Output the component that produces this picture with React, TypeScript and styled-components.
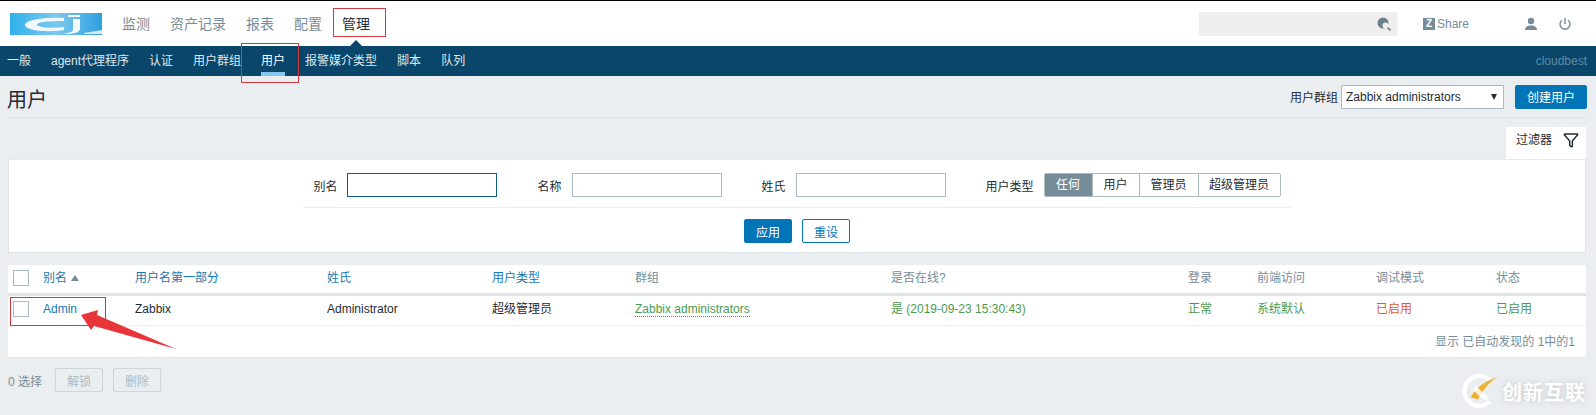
import { createGlobalStyle, styled } from "styled-components";
import { Filter } from "lucide-react";

const GlobalStyle = createGlobalStyle`
  html, body {
    margin: 0;
    padding: 0;
    height: 415px;
    overflow: hidden;
    background: #ebeef0;
  }
  body {
    font-family: "Liberation Sans", "Noto Sans CJK SC", sans-serif;
    font-size: 12px;
    color: #1f2c33;
  }
`;

const Page = styled.div`
  position: relative;
  width: 1596px;
  height: 415px;
  overflow: hidden;
`;

const TopBar = styled.header`
  display: flex;
  align-items: center;
  height: 45px;
  border-top: 1px solid #000;
  background: #fff;
  padding-left: 10px;
`;

const MainNav = styled.nav`
  display: flex;
  margin-left: 10px;
`;

const MainNavItem = styled.a<{ $active?: boolean }>`
  position: relative;
  padding: 0 10px;
  line-height: 44px;
  font-size: 14px;
  color: ${(p) => (p.$active ? "#1f2c33" : "#768d99")};

  ${(p) =>
    p.$active &&
    `&::after {
      content: "";
      position: absolute;
      left: 50%;
      bottom: -1px;
      margin-left: -7px;
      border: 7px solid transparent;
      border-top: 0;
      border-bottom-color: #0a466a;
    }`}
`;

const TopRight = styled.div`
  display: flex;
  align-items: center;
  margin-left: auto;
`;

const SearchBox = styled.div`
  display: flex;
  align-items: center;
  justify-content: flex-end;
  box-sizing: border-box;
  width: 198px;
  height: 24px;
  padding-right: 6px;
  background: #eeeeee;
`;

const ShareLink = styled.a`
  display: flex;
  align-items: center;
  gap: 2px;
  margin-left: 26px;
  color: #768d99;
  font-size: 12px;
`;

const ZMark = styled.span`
  display: block;
  width: 12px;
  height: 12px;
  line-height: 12px;
  text-align: center;
  background: #768d99;
  color: #fff;
  font-size: 10px;
  font-weight: 700;
`;

const TopIcon = styled.span<{ $gap: number }>`
  display: flex;
  margin-left: ${(p) => p.$gap}px;
`;

const SubBar = styled.div`
  display: flex;
  height: 30px;
  background: #0a466a;
  padding: 0 9px 0 7px;
`;

const SubItem = styled.a<{ $active?: boolean }>`
  position: relative;
  margin-right: 20px;
  line-height: 30px;
  color: ${(p) => (p.$active ? "#fff" : "#dfe8ee")};
  white-space: nowrap;

  ${(p) =>
    p.$active &&
    `&::after {
      content: "";
      position: absolute;
      left: 0;
      right: 0;
      bottom: 0;
      height: 4px;
      background: #85c6ee;
    }`}
`;

const ServerName = styled.span`
  margin-left: auto;
  line-height: 30px;
  color: #5f8ba5;
`;

const TitleRow = styled.div`
  display: flex;
  align-items: center;
  height: 41px;
  margin: 0 9px 0 8px;
  border-bottom: 1px solid #dfe4e7;
`;

const PageTitle = styled.h1`
  margin: 4px 0 0 -1px;
  font-size: 20px;
  font-weight: 400;
  color: #1f2c33;
`;

const TitleControls = styled.div`
  display: flex;
  align-items: center;
  margin-left: auto;
`;

const SelectLabel = styled.label`
  margin-right: 3px;
`;

const SelectBox = styled.div`
  display: flex;
  align-items: center;
  justify-content: space-between;
  box-sizing: border-box;
  width: 163px;
  height: 24px;
  padding: 0 6px 0 4px;
  background: #fff;
  border: 1px solid #acbbc2;
`;

const SelectArrow = styled.span`
  width: 0;
  height: 0;
  border-left: 3px solid transparent;
  border-right: 3px solid transparent;
  border-top: 6px solid #1f2c33;
`;

const Button = styled.button<{ $variant: "primary" | "outline" | "disabled"; $width: number }>`
  box-sizing: border-box;
  width: ${(p) => p.$width}px;
  height: 24px;
  padding: 0;
  border-radius: 2px;
  font: inherit;
  border: 1px solid
    ${(p) =>
      p.$variant === "primary" ? "#0275b8" : p.$variant === "outline" ? "#0275b8" : "#cfd6da"};
  background: ${(p) =>
    p.$variant === "primary" ? "#0275b8" : p.$variant === "outline" ? "#fff" : "#ebeef0"};
  color: ${(p) =>
    p.$variant === "primary" ? "#fff" : p.$variant === "outline" ? "#0275b8" : "#acbbc2"};
`;

const CreateButton = styled(Button)`
  margin-left: 11px;
`;

const TabRow = styled.div`
  display: flex;
  justify-content: flex-end;
  margin: 9px 10px 0 8px;
`;

const FilterTab = styled.div`
  display: flex;
  align-items: flex-start;
  gap: 11px;
  box-sizing: border-box;
  width: 80px;
  height: 32px;
  padding: 5px 0 0 10px;
  background: #fff;
  line-height: 16px;
`;

const FilterPanel = styled.section`
  box-sizing: border-box;
  height: 94px;
  margin: 0 10px 0 8px;
  background: #fff;
  border: 1px solid #dfe4e7;
  border-top-color: #e6eaec;
`;

const FilterFields = styled.div`
  display: flex;
  justify-content: center;
  gap: 40px;
  box-sizing: border-box;
  width: 988px;
  height: 48px;
  margin: 0 auto;
  padding-top: 13px;
  border-bottom: 1px solid #ebeef0;
`;

const Field = styled.div`
  display: flex;
  align-items: center;
  gap: 10px;
  height: 24px;
`;

const TextInput = styled.input<{ $focused?: boolean }>`
  box-sizing: border-box;
  width: 150px;
  height: 24px;
  padding: 0 4px;
  background: #fff;
  outline: 0;
  border: 1px solid ${(p) => (p.$focused ? "#0b5f80" : "#acbbc2")};
`;

const Segments = styled.div`
  display: flex;
  height: 24px;
  box-sizing: border-box;
  border: 1px solid #acbbc2;
  border-radius: 2px;
`;

const Segment = styled.span<{ $active?: boolean; $width: number }>`
  box-sizing: border-box;
  width: ${(p) => p.$width}px;
  line-height: 22px;
  text-align: center;
  background: ${(p) => (p.$active ? "#768d99" : "#fff")};
  color: ${(p) => (p.$active ? "#fff" : "#1f2c33")};
  border-right: 1px solid #acbbc2;

  &:last-child {
    border-right: 0;
  }
`;

const FilterActions = styled.div`
  display: flex;
  justify-content: center;
  gap: 10px;
  padding-top: 11px;
`;

const UserTable = styled.section`
  box-sizing: border-box;
  height: 93px;
  margin: 12px 10px 0 8px;
  background: #fff;
  border: solid #dfe4e7;
  border-width: 0 0 1px;
`;

const columns = "30px 92px 192px 165px 143px 256px 297px 69px 119px 120px 95px";

const HeadRow = styled.div`
  display: grid;
  grid-template-columns: ${columns};
  align-items: center;
  height: 31px;
  box-sizing: border-box;
  padding-bottom: 3px;
  border-bottom: 3px solid #dfe4e7;
`;

const BodyRow = styled.div`
  display: grid;
  grid-template-columns: ${columns};
  align-items: center;
  height: 30px;
  box-sizing: border-box;
  padding-bottom: 3px;
  border-bottom: 1px solid #ebeef0;
`;

const Cell = styled.div<{ $tone?: "link" | "muted" | "green" | "red" }>`
  padding-left: 5px;
  line-height: 16px;
  white-space: nowrap;
  color: ${(p) =>
    p.$tone === "link"
      ? "#1679b0"
      : p.$tone === "muted"
        ? "#768d99"
        : p.$tone === "green"
          ? "#4d9a52"
          : p.$tone === "red"
            ? "#e0592a"
            : "#1f2c33"};
`;

const CheckBox = styled.span`
  display: block;
  box-sizing: border-box;
  width: 16px;
  height: 16px;
  background: #fff;
  border: 1px solid #acbbc2;
`;

const SortArrow = styled.span`
  display: inline-block;
  margin-left: 4px;
  vertical-align: 1px;
  border-left: 4px solid transparent;
  border-right: 4px solid transparent;
  border-bottom: 6px solid #768d99;
`;

const GroupLink = styled.a`
  border-bottom: 1px dotted #4d9a52;
  color: #4d9a52;
`;

const TableSummary = styled.div`
  padding-right: 11px;
  line-height: 33px;
  text-align: right;
  color: #768d99;
`;

const ActionRow = styled.div`
  display: flex;
  align-items: center;
  gap: 10px;
  margin: 10px 0 0 8px;
  color: #768d99;
`;

const SelectedCount = styled.span`
  margin-right: 3px;
`;

const Callout = styled.div<{ $x: number; $y: number; $w: number; $h: number }>`
  position: absolute;
  left: ${(p) => p.$x}px;
  top: ${(p) => p.$y}px;
  width: ${(p) => p.$w}px;
  height: ${(p) => p.$h}px;
  box-sizing: border-box;
  border: 1px solid #d8373c;
`;

const ArrowMark = styled.svg`
  position: absolute;
  left: 78px;
  top: 310px;
`;

const Watermark = styled.div`
  position: absolute;
  right: 10px;
  top: 372px;
  display: flex;
  align-items: center;
  gap: 5px;
`;

const WatermarkText = styled.span`
  font-size: 20px;
  font-weight: 700;
  letter-spacing: 1px;
  color: #fff;
  text-shadow: 0 0 6px rgba(120, 130, 140, 0.35);
`;

function Logo() {
  return (
    <svg width="92" height="22" viewBox="0 0 92 22">
      <defs>
        <linearGradient id="logoBg" x1="0" x2="1" y1="0" y2="0">
          <stop offset="0" stopColor="#2fb0ea" />
          <stop offset="0.5" stopColor="#7cc9ee" />
          <stop offset="1" stopColor="#2f9fdf" />
        </linearGradient>
      </defs>
      <rect width="92" height="22" fill="url(#logoBg)" />
      <path d="M54 5C35 4 15 7 15 12s20 8 39 5v-3c-14 2-27 0-27-2.500S40 8 54 8z" fill="#f2f8fb" />
      <rect x="58" y="2" width="12" height="2" fill="#f2f8fb" />
      <path d="M63 6h7v10c0 3-5 5-17 5 6-1 10-2 10-5z" fill="#f2f8fb" />
      <path d="M74 20c6-1 12-2 18-3v4H74z" fill="#d5eaf5" />
    </svg>
  );
}

function SearchIcon() {
  return (
    <svg width="14" height="14" viewBox="0 0 14 14">
      <circle cx="6" cy="6" r="5.5" fill="#6d7f88" />
      <circle cx="8.5" cy="8.5" r="3" fill="#eeeeee" />
      <path d="M10.6 10.6L13.5 13.5" stroke="#6d7f88" strokeWidth="1.6" />
    </svg>
  );
}

function UserIcon() {
  return (
    <svg width="14" height="14" viewBox="0 0 14 14" fill="#768d99">
      <circle cx="7" cy="4" r="3.2" />
      <path d="M1 13c0-3 2.500-4.500 6-4.500s6 1.500 6 4.500z" />
    </svg>
  );
}

function PowerIcon() {
  return (
    <svg width="14" height="14" viewBox="0 0 14 14" fill="none" stroke="#768d99" strokeWidth="1.4">
      <path d="M4 3.200a5 5 0 1 0 6 0" />
      <path d="M7 1v6" />
    </svg>
  );
}

function WatermarkLogo() {
  return (
    <svg width="38" height="38" viewBox="0 0 36 36">
      <path d="M29 8A14 14 0 1 0 29 28" fill="none" stroke="#fff" strokeWidth="4" />
      <path d="M36 5C24 9 16 15 11 24l7 2C22 17 29 10 36 5z" fill="#efb02f" />
      <path d="M16 13l13 13h-6l-10-9z" fill="#fff" opacity="0.8" />
    </svg>
  );
}

export default function App() {
  return (
    <Page>
      <GlobalStyle />
      <TopBar>
        <Logo />
        <MainNav>
          <MainNavItem>监测</MainNavItem>
          <MainNavItem>资产记录</MainNavItem>
          <MainNavItem>报表</MainNavItem>
          <MainNavItem>配置</MainNavItem>
          <MainNavItem $active>管理</MainNavItem>
        </MainNav>
        <TopRight>
          <SearchBox>
            <SearchIcon />
          </SearchBox>
          <ShareLink>
            <ZMark>Z</ZMark>
            Share
          </ShareLink>
          <TopIcon $gap={55}>
            <UserIcon />
          </TopIcon>
          <TopIcon $gap={20}>
            <PowerIcon />
          </TopIcon>
          <TopIcon $gap={24} />
        </TopRight>
      </TopBar>
      <SubBar>
        <SubItem>一般</SubItem>
        <SubItem>agent代理程序</SubItem>
        <SubItem>认证</SubItem>
        <SubItem>用户群组</SubItem>
        <SubItem $active>用户</SubItem>
        <SubItem>报警媒介类型</SubItem>
        <SubItem>脚本</SubItem>
        <SubItem>队列</SubItem>
        <ServerName>cloudbest</ServerName>
      </SubBar>
      <TitleRow>
        <PageTitle>用户</PageTitle>
        <TitleControls>
          <SelectLabel>用户群组</SelectLabel>
          <SelectBox>
            Zabbix administrators
            <SelectArrow />
          </SelectBox>
          <CreateButton $variant="primary" $width={72}>
            创建用户
          </CreateButton>
        </TitleControls>
      </TitleRow>
      <TabRow>
        <FilterTab>
          过滤器
          <Filter size={16} strokeWidth={2.2} color="#1f2c33" />
        </FilterTab>
      </TabRow>
      <FilterPanel>
        <FilterFields>
          <Field>
            别名
            <TextInput $focused />
          </Field>
          <Field>
            名称
            <TextInput />
          </Field>
          <Field>
            姓氏
            <TextInput />
          </Field>
          <Field>
            用户类型
            <Segments>
              <Segment $active $width={48}>
                任何
              </Segment>
              <Segment $width={47}>用户</Segment>
              <Segment $width={59}>管理员</Segment>
              <Segment $width={81}>超级管理员</Segment>
            </Segments>
          </Field>
        </FilterFields>
        <FilterActions>
          <Button $variant="primary" $width={48}>
            应用
          </Button>
          <Button $variant="outline" $width={48}>
            重设
          </Button>
        </FilterActions>
      </FilterPanel>
      <UserTable>
        <HeadRow>
          <Cell>
            <CheckBox />
          </Cell>
          <Cell $tone="link">
            别名
            <SortArrow />
          </Cell>
          <Cell $tone="link">用户名第一部分</Cell>
          <Cell $tone="link">姓氏</Cell>
          <Cell $tone="link">用户类型</Cell>
          <Cell $tone="muted">群组</Cell>
          <Cell $tone="muted">是否在线?</Cell>
          <Cell $tone="muted">登录</Cell>
          <Cell $tone="muted">前端访问</Cell>
          <Cell $tone="muted">调试模式</Cell>
          <Cell $tone="muted">状态</Cell>
        </HeadRow>
        <BodyRow>
          <Cell>
            <CheckBox />
          </Cell>
          <Cell $tone="link">Admin</Cell>
          <Cell>Zabbix</Cell>
          <Cell>Administrator</Cell>
          <Cell>超级管理员</Cell>
          <Cell>
            <GroupLink>Zabbix administrators</GroupLink>
          </Cell>
          <Cell $tone="green">是 (2019-09-23 15:30:43)</Cell>
          <Cell $tone="green">正常</Cell>
          <Cell $tone="green">系统默认</Cell>
          <Cell $tone="red">已启用</Cell>
          <Cell $tone="green">已启用</Cell>
        </BodyRow>
        <TableSummary>显示 已自动发现的 1中的1</TableSummary>
      </UserTable>
      <ActionRow>
        <SelectedCount>0 选择</SelectedCount>
        <Button $variant="disabled" $width={48}>
          解锁
        </Button>
        <Button $variant="disabled" $width={48}>
          删除
        </Button>
      </ActionRow>

      <Callout $x={333} $y={8} $w={53} $h={29} />
      <Callout $x={241} $y={43} $w={58} $h={40} />
      <Callout $x={10} $y={297} $w={96} $h={29} />
      <ArrowMark width="100" height="42" viewBox="0 0 100 42">
        <path d="M3 5L20 0 19 5 98 39 16 16 13 20z" fill="#e8353a" />
      </ArrowMark>
      <Watermark>
        <WatermarkLogo />
        <WatermarkText>创新互联</WatermarkText>
      </Watermark>
    </Page>
  );
}
